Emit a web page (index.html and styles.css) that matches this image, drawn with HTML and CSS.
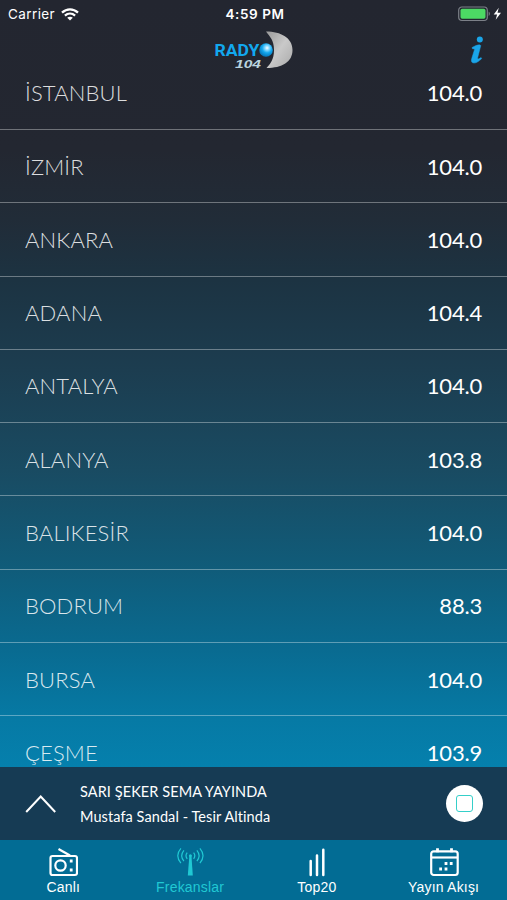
FILE: index.html
```html
<!doctype html>
<html lang="tr">
  <head>
    <meta charset="UTF-8" />
    <meta name="viewport" content="width=device-width, initial-scale=1.0" />
    <title>Radyo D - Frekanslar</title>
    <link rel="stylesheet" href="styles.css">
  </head>
  <body>
    <div class="app">
      <header class="header">
        <div class="status-bar">
          <div class="status-left">
            <span class="carrier">Carrier</span>
            <svg class="wifi" width="18" height="13" viewBox="0 0 18 13" fill="none" stroke="#fff" stroke-width="2.3">
              <path d="M1 4.6C5.7.2 12.3.2 17 4.6" />
              <path d="M3.9 7.7c3-2.7 7.2-2.7 10.2 0" />
              <path d="M9 12.5L6.2 9.7c1.6-1.4 4-1.4 5.6 0z" fill="#fff" stroke="none" />
            </svg>
          </div>
          <span class="clock">4:59 PM</span>
          <div class="status-right">
            <svg width="44" height="16" viewBox="0 0 44 16">
              <rect x=".7" y="1" width="28.6" height="13.5" rx="3.2" fill="none" stroke="#7c8088" stroke-width="1.2" />
              <rect x="2.5" y="2.8" width="25" height="10" rx="1.7" fill="#4cd964" />
              <path d="M30.7 5.5c1.6.7 1.6 3.8 0 4.5z" fill="#7c8088" />
              <path d="M40.800 1.8L35.7 8.500h3.4l-1.4 5.2 5.3-6.9h-3.5z" fill="#fff" />
            </svg>
          </div>
        </div>
        <div class="nav">
          <svg class="logo" width="82" height="40" viewBox="0 0 82 40">
            <defs>
              <linearGradient id="silver" x1="0" y1="0" x2="1" y2="1">
                <stop offset="0" stop-color="#999" />
                <stop offset=".5" stop-color="#c9c9c9" />
                <stop offset="1" stop-color="#aaa" />
              </linearGradient>
              <radialGradient id="ball" cx=".58" cy=".35" r=".6">
                <stop offset="0" stop-color="#fff" />
                <stop offset=".25" stop-color="#8fdcff" />
                <stop offset=".6" stop-color="#12a8ee" />
                <stop offset="1" stop-color="#087dc0" />
              </radialGradient>
            </defs>
            <path d="M53 1.5C68 1.5 79.5 8 79.5 20S69 38 53.5 38c3.500-4 7.500-8 7.500-18S57 7 53 1.5z" fill="url(#silver)" />
            <text x="1.500" y="25.500" class="logo-name" textLength="45" lengthAdjust="spacingAndGlyphs">RADY</text>
            <circle cx="53" cy="20" r="6.8" fill="url(#ball)" />
            <text x="22" y="37.700" class="logo-number" textLength="26" lengthAdjust="spacingAndGlyphs">104</text>
          </svg>
          <svg class="info" width="15" height="28" viewBox="0 0 15 28">
            <circle cx="9.8" cy="3.5" r="3" fill="#1aa5e8" />
            <path d="M2 11.6C5 9.8 7 9 9.500 8.800l1.300.8L7.700 21.500c-.4 1.800.6 2 3.400.1l.6 1C8.200 26 6 27 4 27c-2.600 0-3-2-2.200-4.700L4.700 13l-2.300-.3z" fill="#1aa5e8" stroke="#1aa5e8" stroke-width=".5" />
          </svg>
        </div>
      </header>

      <main class="content">
        <ul class="stations">
          <li class="station"><span class="city">İSTANBUL</span><span class="freq">104.0</span></li>
          <li class="station"><span class="city">İZMİR</span><span class="freq">104.0</span></li>
          <li class="station"><span class="city">ANKARA</span><span class="freq">104.0</span></li>
          <li class="station"><span class="city">ADANA</span><span class="freq">104.4</span></li>
          <li class="station"><span class="city">ANTALYA</span><span class="freq">104.0</span></li>
          <li class="station"><span class="city">ALANYA</span><span class="freq">103.8</span></li>
          <li class="station"><span class="city">BALIKESİR</span><span class="freq">104.0</span></li>
          <li class="station"><span class="city">BODRUM</span><span class="freq">88.3</span></li>
          <li class="station"><span class="city">BURSA</span><span class="freq">104.0</span></li>
          <li class="station"><span class="city">ÇEŞME</span><span class="freq">103.9</span></li>
        </ul>
      </main>

      <section class="player">
        <svg class="expand" width="32" height="20" viewBox="0 0 32 20" fill="none" stroke="#fff" stroke-width="2">
          <path d="M1.200 18L15.700 2.500 30.200 18" />
        </svg>
        <div class="track">
          <div class="show">SARI ŞEKER SEMA YAYINDA</div>
          <div class="song">Mustafa Sandal - Tesir Altinda</div>
        </div>
        <button class="stop" aria-label="Durdur"><span class="stop-icon"></span></button>
      </section>

      <nav class="tabs">
        <a class="tab">
          <svg width="30" height="30" viewBox="0 0 30 30" fill="none" stroke="#fff" stroke-width="2.2">
            <rect x="2.500" y="9" width="26.500" height="19" rx="2" />
            <path d="M10.500 2L22 8.500" />
            <circle cx="12.500" cy="18.500" r="5.200" />
            <path d="M21.800 14h2.800M21.800 23h2.800" stroke-width="2.8" />
          </svg>
          <span>Canlı</span>
        </a>
        <a class="tab active">
          <svg width="30" height="30" viewBox="0 0 30 30" fill="none" stroke="#20c8d3" stroke-width="1.2">
            <path d="M14.300 9.500h2.200L17.800 28.500h-5z" fill="#20c8d3" stroke="none" />
            <circle cx="15.400" cy="8.700" r="1.500" fill="#20c8d3" stroke="none" />
            <path d="M12.200 5.700c-1.500 1.900-1.500 4.200 0 6.100M18.600 5.700c1.500 1.900 1.500 4.200 0 6.100" />
            <path d="M8.900 3.400c-2.700 3.300-2.700 7.400 0 10.700M21.900 3.400c2.700 3.300 2.700 7.400 0 10.700" />
            <path d="M5.900 1.400c-4 4.700-4 10 0 14.700M24.900 1.400c4 4.700 4 10 0 14.700" />
          </svg>
          <span>Frekanslar</span>
        </a>
        <a class="tab">
          <svg width="30" height="30" viewBox="0 0 30 30" fill="none" stroke="#fff" stroke-width="2.5" stroke-linecap="round">
            <path d="M8.700 14V28M15 8.500V28M21.300 2.800V28" />
          </svg>
          <span>Top20</span>
        </a>
        <a class="tab">
          <svg width="30" height="30" viewBox="0 0 30 30" fill="none" stroke="#fff" stroke-width="2.2">
            <rect x="2.200" y="4.300" width="26.500" height="23.700" rx="2.500" />
            <path d="M2.500 10.500h26" />
            <path d="M8.500 1.300v4M22.500 1.300v4" stroke-width="2.800" />
            <path d="M15.600 16.500h2.800M20.800 16.500h2.800M10.200 22h2.800M15.600 22h2.800" stroke-width="2.800" />
          </svg>
          <span>Yayın Akışı</span>
        </a>
      </nav>
    </div>
  </body>
</html>
```
FILE: styles.css
```css
* {
  box-sizing: border-box;
}
body {
  margin: 0;
  font-family: Lato, sans-serif;
  color: #fff;
}
.app {
  display: flex;
  flex-direction: column;
  height: 900px;
  overflow: hidden;
  background: linear-gradient(
    #232630 0,
    #232731 150px,
    #212c38 220px,
    #1c3342 280px,
    #1c3d50 370px,
    #194b62 470px,
    #105c7a 570px,
    #096b91 650px,
    #067aa5 720px,
    #0580ad 768px
  );
}
.header {
  flex: none;
  height: 75px;
}
.status-bar {
  display: grid;
  grid-template-columns: 1fr auto 1fr;
  align-items: center;
  height: 28px;
  padding: 0 5px 0 8px;
  font-family: Inter, sans-serif;
  font-size: 13.5px;
}
.status-left {
  display: flex;
  align-items: center;
  gap: 6px;
}
.carrier {
  letter-spacing: 0.4px;
}
.clock {
  font-weight: 600;
  letter-spacing: 0.6px;
}
.status-right {
  display: flex;
  justify-content: flex-end;
}
.nav {
  display: grid;
  grid-template-columns: 1fr auto 1fr;
  align-items: center;
  height: 44px;
  padding: 0 22px;
}
.logo {
  grid-column: 2;
}
.logo-name {
  font-family: Roboto, sans-serif;
  font-weight: bold;
  font-size: 16px;
  fill: #12a8ee;
}
.logo-number {
  font-family: "Liberation Sans", sans-serif;
  font-weight: bold;
  font-style: italic;
  font-size: 11px;
  fill: #b9d3df;
}
.info {
  justify-self: end;
}
.content {
  flex: 1;
  min-height: 0;
  overflow: hidden;
}
.stations {
  margin: -18.4px 0 0;
  padding: 0;
  list-style: none;
}
.station {
  display: flex;
  justify-content: space-between;
  align-items: center;
  height: 73.3px;
  padding: 0 25px;
  border-bottom: 1px solid rgba(255, 255, 255, 0.35);
  font-size: 22px;
}
.city {
  font-weight: 300;
  letter-spacing: 0.15px;
  color: rgba(255, 255, 255, 0.85);
}
.freq {
  letter-spacing: -0.2px;
}
.player {
  flex: none;
  display: flex;
  align-items: center;
  height: 73px;
  padding: 0 24px 0 25px;
  background: #163b54;
}
.track {
  flex: 1;
  margin-left: 23px;
  font-size: 14.5px;
  line-height: 25px;
  letter-spacing: 0.08px;
  font-variant-ligatures: none;
}
.stop {
  display: flex;
  align-items: center;
  justify-content: center;
  width: 37px;
  height: 37px;
  padding: 0;
  border: 0;
  border-radius: 50%;
  background: #fff;
}
.stop-icon {
  width: 17px;
  height: 17px;
  border: 1px solid #35cfc9;
  border-radius: 3px;
}
.tabs {
  flex: none;
  display: grid;
  grid-template-columns: repeat(4, 1fr);
  height: 60px;
  background: #026c94;
}
.tab {
  display: flex;
  flex-direction: column;
  align-items: center;
  padding-top: 7px;
  font-family: "Liberation Sans", sans-serif;
  font-size: 14px;
  line-height: 21px;
  letter-spacing: 0.2px;
}
.tab.active {
  color: #20c8d3;
}
```
